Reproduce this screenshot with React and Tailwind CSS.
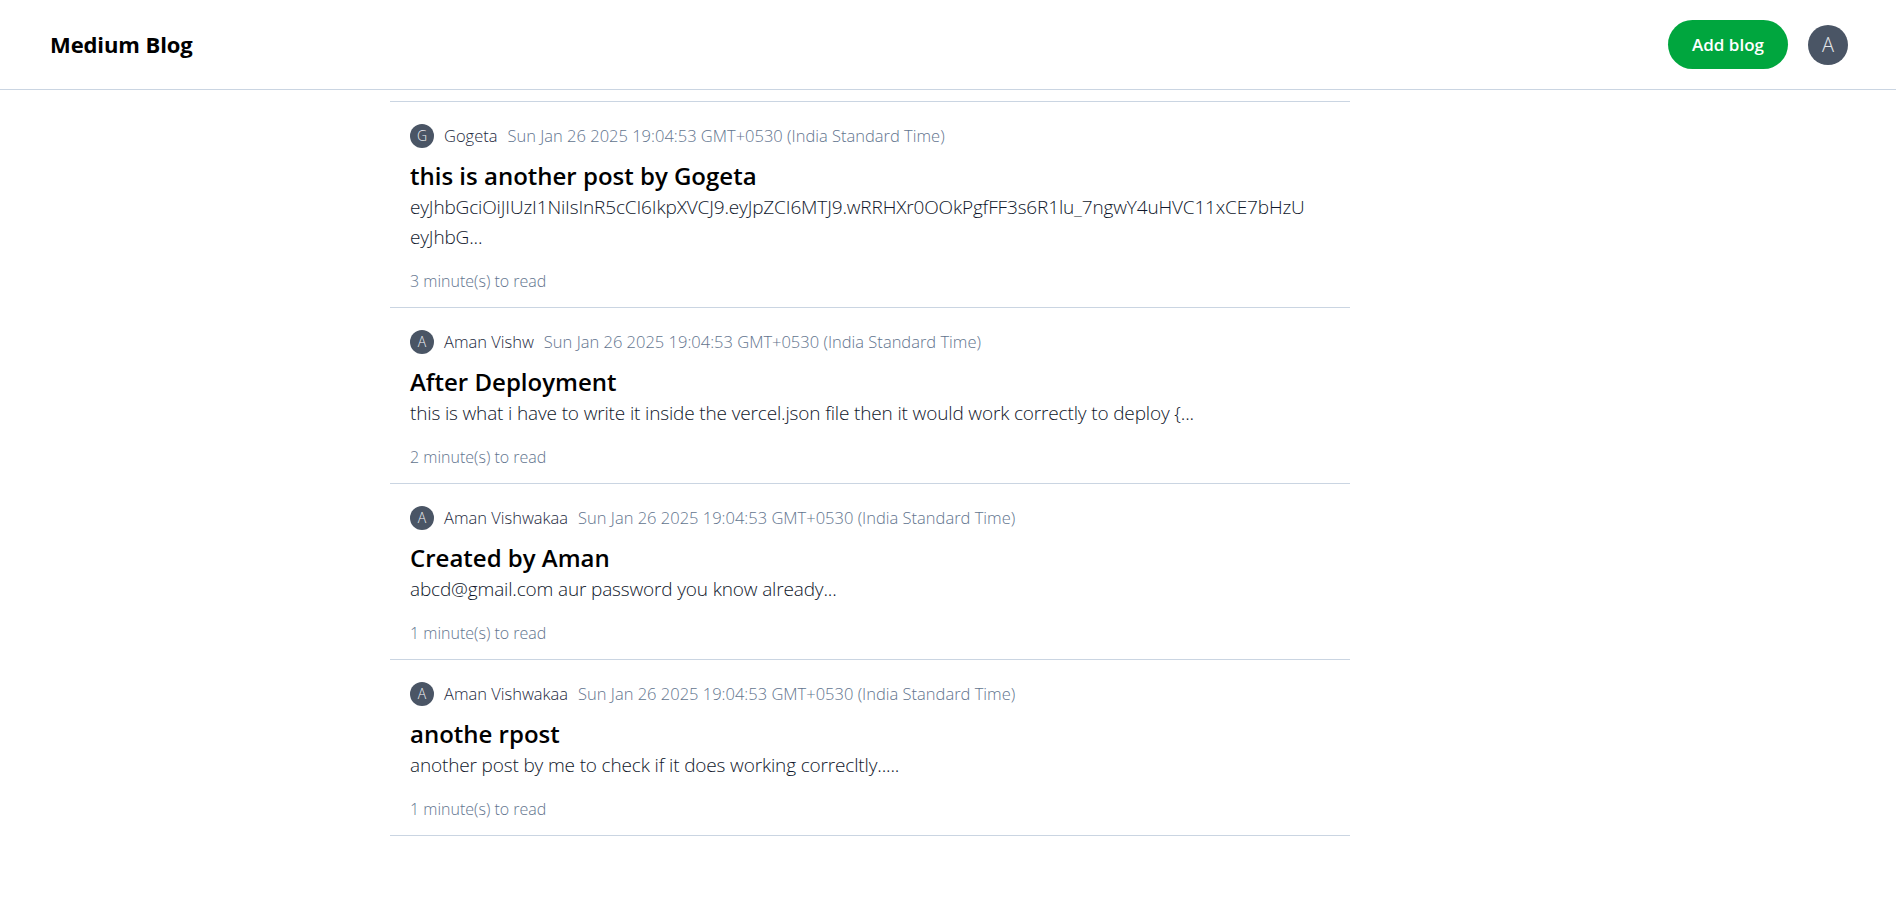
const posts = [
  {
    id: 1,
    author: 'Gogeta',
    date: 'Sun Jan 26 2025 19:04:53 GMT+0530 (India Standard Time)',
    title: 'this is another post by Gogeta',
    content:
      'eyJhbGciOiJIUzI1NiIsInR5cCI6IkpXVCJ9.eyJpZCI6MTJ9.wRRHXr0OOkPgfFF3s6R1lu_7ngwY4uHVC11xCE7bHzU eyJhbG...',
    minutes: 3,
  },
  {
    id: 2,
    author: 'Aman Vishw',
    date: 'Sun Jan 26 2025 19:04:53 GMT+0530 (India Standard Time)',
    title: 'After Deployment',
    content: 'this is what i have to write it inside the vercel.json file then it would work correctly to deploy {...',
    minutes: 2,
  },
  {
    id: 3,
    author: 'Aman Vishwakaa',
    date: 'Sun Jan 26 2025 19:04:53 GMT+0530 (India Standard Time)',
    title: 'Created by Aman',
    content: 'abcd@gmail.com aur password you know already...',
    minutes: 1,
  },
  {
    id: 4,
    author: 'Aman Vishwakaa',
    date: 'Sun Jan 26 2025 19:04:53 GMT+0530 (India Standard Time)',
    title: 'anothe rpost',
    content: 'another post by me to check if it does working correcltly.....',
    minutes: 1,
  },
]

export default function App() {
  return (
    <div className="min-h-screen bg-white text-black font-['Open_Sans',sans-serif]">
      <AppBar />
      <main className="pt-[11px] pl-[390px]">
        <div className="w-[960px] border-t border-slate-300">
          {posts.map(p => <BlogCard key={p.id} post={p} />)}
        </div>
      </main>
    </div>
  )
}

function AppBar() {
  return (
    <header className="h-[90px] flex items-center justify-between pl-[50px] pr-12 border-b border-slate-300">
      <div className="text-[22px] font-bold tracking-[-0.1px]">Medium Blog</div>
      <div className="flex items-center gap-5">
        <button className="h-[49px] px-6 rounded-full bg-green-600 text-white text-[17px] font-semibold">
          Add blog
        </button>
        <Avatar name="A" size="big" />
      </div>
    </header>
  )
}

function Avatar({ name, size }) {
  if (size === 'big') {
    return (
      <div className="w-10 h-10 rounded-full bg-gray-600 flex items-center justify-center">
        <span className="text-xl font-light text-gray-200">{name[0]}</span>
      </div>
    )
  }
  return (
    <div className="w-6 h-6 rounded-full bg-gray-600 flex items-center justify-center shrink-0">
      <span className="text-sm font-light text-gray-100 leading-none">{name[0]}</span>
    </div>
  )
}

function BlogCard({ post }) {
  return (
    <div className="px-5 pt-[22px] pb-[14px] border-b border-slate-300">
      <div className="flex items-center h-6">
        <Avatar name={post.author} />
        <span className="ml-2.5 text-[16.5px] font-light text-slate-800">{post.author}</span>
        <span className="ml-2.5 text-[16.5px] font-light text-slate-500">{post.date}</span>
      </div>
      <h2 className="mt-[12px] text-2xl leading-8 font-semibold">{post.title}</h2>
      <p className="text-[19px] leading-[30px] tracking-[-0.15px] font-light text-slate-900">{post.content}</p>
      <div className="mt-[17px] text-base font-light text-slate-500">{post.minutes} minute(s) to read</div>
    </div>
  )
}
